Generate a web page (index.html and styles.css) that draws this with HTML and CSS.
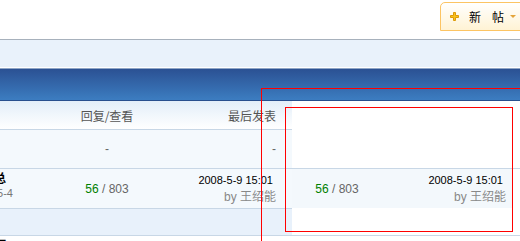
FILE: index.html
```html
<!DOCTYPE html>
<html lang="zh">
<head>
    <meta charset="UTF-8">
    <title>论坛列表</title>
    <link rel="stylesheet" href="styles.css">
</head>
<body>
    <div class="topbar">
        <div class="newpost">
            <svg class="plus" width="9" height="9" viewBox="0 0 9 9"><path d="M3.5 .5h2v3h3v2h-3v3h-2v-3h-3v-2h3z" fill="#f9c21d" stroke="#dd9a08"/></svg>
            <span class="label">新帖</span>
            <span class="arrow"></span>
        </div>
    </div>
    <div class="subnav"></div>
    <div class="titlebar"></div>

    <div class="threads">
        <div class="row head">
            <div class="main">
                <div class="topic"></div>
                <div class="nums">回复/查看</div>
                <div class="last">最后发表</div>
            </div>
            <div class="rest"></div>
        </div>
        <div class="row plain">
            <div class="main">
                <div class="topic"></div>
                <div class="nums dash">-</div>
                <div class="last dash">-</div>
            </div>
            <div class="rest lined"></div>
        </div>
        <div class="row plain">
            <div class="main">
                <div class="topic shifted">
                    <div class="title-line"><span>公告汇总</span></div>
                    <div class="author-line"><span>2008-5-4</span></div>
                </div>
                <div class="nums"><em>56</em> / 803</div>
                <div class="last">
                    <div class="date">2008-5-9 15:01</div>
                    <div class="by">by 王绍能</div>
                </div>
            </div>
            <div class="rest">
                <div class="ghost">
                    <div class="nums"><em>56</em> / 803</div>
                    <div class="last">
                        <div class="date">2008-5-9 15:01</div>
                        <div class="by">by 王绍能</div>
                    </div>
                </div>
            </div>
        </div>
        <div class="row sep">
            <div class="main"></div>
            <div class="rest lined"></div>
        </div>
        <div class="row tail">
            <div class="main">
                <div class="topic">
                    <div class="title-line"><span>置顶</span></div>
                </div>
            </div>
        </div>
    </div>

    <div class="mark mark-outer"></div>
    <div class="mark mark-inner"></div>
</body>
</html>
```

FILE: styles.css
```css
body {
    margin: 0;
    width: 520px;
    height: 241px;
    overflow: hidden;
    position: relative;
    background: #fff;
    font-family: "Liberation Sans", "Noto Sans CJK SC", sans-serif;
    font-size: 12px;
    color: #333;
}
.topbar {
    height: 39px;
    border-bottom: 1px solid #a7b1bc;
    display: flex;
    justify-content: flex-end;
    align-items: flex-start;
}
.newpost {
    margin-top: 2px;
    margin-right: -12px;
    width: 90px;
    height: 27px;
    border: 1px solid #fcc463;
    border-top-left-radius: 5px;
    background: linear-gradient(#ffffff, #fff3d4);
    display: flex;
    align-items: center;
    box-sizing: content-box;
}
.newpost .plus {
    margin-left: 9px;
    flex: none;
}
.newpost .label {
    margin-left: 10px;
    font-family: "Noto Sans CJK SC", sans-serif;
    font-size: 12px;
    color: #000;
    letter-spacing: 11px;
}
.newpost .arrow {
    margin-left: -5px;
    width: 0;
    height: 0;
    border-left: 3px solid transparent;
    border-right: 3px solid transparent;
    border-top: 3px solid #e4a43a;
}
.subnav {
    height: 27px;
    background: #e9f2fb;
    border-bottom: 1px solid #fff;
}
.titlebar {
    height: 31px;
    border-top: 1px solid #8fa6c6;
    border-bottom: 1px solid #284f8e;
    background: linear-gradient(#2b5193, #3c7dc1);
}
.row {
    display: flex;
}
.main {
    width: 292px;
    flex: none;
    display: flex;
    border-bottom: 1px solid #c8d7e6;
}
.rest {
    flex: 1;
}
.rest.lined {
    border-bottom: 1px solid #c8d7e6;
}
.head .main {
    height: 28px;
    background: linear-gradient(#e3eef9, #ffffff);
    color: #555;
}
.plain .main {
    background: #f4f9fd;
}
.row.plain:nth-child(2) .main {
    height: 38px;
}
.row.plain:nth-child(3) .main {
    height: 39px;
}
.sep .main {
    height: 26px;
    background: #e8f1fb;
}
.tail .main {
    border-bottom: none;
    height: 20px;
}
.topic {
    width: 62px;
    flex: none;
    overflow: hidden;
    display: flex;
    flex-direction: column;
    justify-content: center;
}
.topic.shifted {
    padding-bottom: 8px;
}
.title-line, .author-line {
    display: flex;
    justify-content: flex-end;
    white-space: nowrap;
}
.title-line {
    width: 6px;
    font-family: "Noto Sans CJK SC", sans-serif;
    font-weight: bold;
    color: #000;
    line-height: 16px;
}
.author-line {
    width: 13px;
    color: #777;
    line-height: 14px;
    font-size: 11px;
}
.tail .topic {
    justify-content: flex-start;
    padding-top: 1px;
}
.nums {
    width: 90px;
    flex: none;
    display: flex;
    align-items: center;
    justify-content: center;
    color: #666;
    white-space: pre;
}
.head .nums, .head .last {
    font-family: "Noto Sans CJK SC", sans-serif;
    color: #555;
}
.nums em {
    font-style: normal;
    color: #008000;
}
.last {
    flex: 1;
    display: flex;
    flex-direction: column;
    justify-content: center;
    align-items: flex-end;
    padding-right: 16px;
}
.dash {
    color: #666;
}
.date {
    font-size: 11px;
    color: #000;
    line-height: 17px;
    margin-right: 3px;
}
.by {
    color: #888;
    line-height: 17px;
}
.ghost {
    width: 220px;
    height: 39px;
    background: #f3f8fc;
    display: flex;
}
.ghost .last {
    padding-right: 6px;
}
.mark {
    position: absolute;
    border: 1px solid #f00;
}
.mark-outer {
    left: 261px;
    top: 88px;
    width: 300px;
    height: 200px;
}
.mark-inner {
    left: 285px;
    top: 107px;
    width: 226px;
    height: 123px;
}
```
